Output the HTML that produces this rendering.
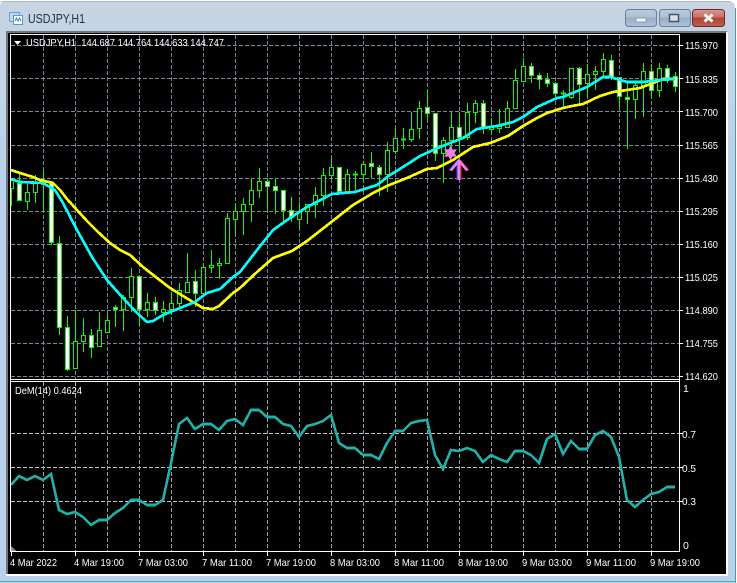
<!DOCTYPE html>
<html><head><meta charset="utf-8"><title>USDJPY,H1</title>
<style>
html,body{margin:0;padding:0;background:#fff;width:737px;height:583px;overflow:hidden}
svg{display:block;position:absolute;left:0;top:0}
text{font-family:"Liberation Sans",sans-serif;font-size:10.500px;fill:#fff}
</style></head><body>
<svg width="737" height="583" viewBox="0 0 737 583" xmlns="http://www.w3.org/2000/svg">
<defs>
<linearGradient id="bg" x1="0" y1="0" x2="0" y2="1"><stop offset="0" stop-color="#c6d4e3"/><stop offset=".12" stop-color="#c4d5e7"/><stop offset=".3" stop-color="#b9d1ea"/><stop offset="1" stop-color="#b9d1ea"/></linearGradient>
<linearGradient id="tb" x1="0" y1="0" x2="0" y2="1"><stop offset="0" stop-color="#bccbdc"/><stop offset=".45" stop-color="#aebfd2"/><stop offset=".5" stop-color="#98aec6"/><stop offset="1" stop-color="#afc2d8"/></linearGradient>
<linearGradient id="cb" x1="0" y1="0" x2="0" y2="1"><stop offset="0" stop-color="#d79a90"/><stop offset=".45" stop-color="#c66f62"/><stop offset=".5" stop-color="#ad4436"/><stop offset="1" stop-color="#bf5f50"/></linearGradient>
<clipPath id="mc"><rect x="11" y="35" width="668" height="344"/></clipPath>
</defs>
<path d="M0 583V6Q0 1 6 1H728Q735 1 735 8V583Z" fill="url(#bg)"/>
<path d="M735.500 8V583" stroke="#4a9aa8" fill="none"/>
<path d="M0 581.500H735" stroke="#2fb5bd"/>
<path d="M0 1.500H730" stroke="#9aa9b8" opacity=".6"/>

<!-- title icon -->
<rect x="9.500" y="12.500" width="10" height="9" fill="#bcd6f2" stroke="#6f9ed6"/>
<rect x="13.500" y="15.500" width="9" height="9" fill="#fff" stroke="#5f95d8"/>
<path d="M15 21l1.500-3 1.500 3 1.500-3 1.500 3" fill="none" stroke="#3f7fd0"/>
<text x="28" y="23" textLength="57" lengthAdjust="spacingAndGlyphs" style="font-size:12.500px;fill:#24303d">USDJPY,H1</text>

<!-- buttons -->
<rect x="625.500" y="9.500" width="31" height="17" rx="3" fill="url(#tb)" stroke="#6d8097"/>
<rect x="636" y="18" width="10" height="4" fill="#f0f3f6" stroke="#6d7f92" stroke-width=".6"/>
<rect x="659.500" y="9.500" width="31" height="17" rx="3" fill="url(#tb)" stroke="#6d8097"/>
<rect x="669.500" y="14.500" width="9" height="7" fill="#d8dfe7" stroke="#46566a" stroke-width="1.500"/>
<rect x="692.500" y="9.500" width="32" height="17" rx="3" fill="url(#cb)" stroke="#6a2a2a"/>
<path d="M704.500 14.500l8 7m0-7l-8 7" stroke="#f2f2f2" stroke-width="3" fill="none"/>

<!-- client -->
<rect x="6" y="31" width="721" height="544" fill="#6f7680"/>
<rect x="8" y="33" width="719" height="541" fill="#000"/>
<rect x="6" y="574" width="722" height="2" fill="#fff"/>
<rect x="726" y="32" width="2" height="544" fill="#fff"/>

<!-- grid main -->
<g stroke="#778899" fill="none" stroke-dasharray="4 2" shape-rendering="crispEdges">
<path d="M11 45.500H679M11 78.500H679M11 111.500H679M11 145.500H679M11 178.500H679M11 211.500H679M11 244.500H679M11 277.500H679M11 310.500H679M11 343.500H679M11 376.500H679"/>
<path d="M43.500 35V379M75.500 35V379M107.500 35V379M139.500 35V379M171.500 35V379M203.500 35V379M235.500 35V379M267.500 35V379M299.500 35V379M331.500 35V379M363.500 35V379M395.500 35V379M427.500 35V379M459.500 35V379M491.500 35V379M523.500 35V379M555.500 35V379M587.500 35V379M619.500 35V379M651.500 35V379"/>
</g>

<g clip-path="url(#mc)" shape-rendering="crispEdges">
<!-- wicks -->
<path fill="none" stroke="#00ff00" d="M11.500 178V206M19.500 173V201M27.500 182V210M35.500 175V203M43.500 170V212M51.500 181V245M59.500 236V335M67.500 316V371M75.500 310V368M83.500 318V352M91.500 329V358M99.500 312V346M107.500 314V332M115.500 305V327M123.500 295V331M131.500 268V312M139.500 276V326M147.500 293V317M155.500 297V315M163.500 301V322M171.500 292V315M179.500 283V308M187.500 253V292M195.500 270V307M203.500 263V293M211.500 250V273M219.500 258V279M227.500 213V263M235.500 203V234M243.500 198V235M251.500 178V222M259.500 168V198M267.500 178V210M275.500 178V214M283.500 190V222M291.500 197V222M299.500 202V228M307.500 204V224M315.500 187V218M323.500 168V206M331.500 158V180M339.500 167V193M347.500 169V193M355.500 171V190M363.500 161V181M371.500 152V178M379.500 165V196M387.500 142V192M395.500 128V154M403.500 128V149M411.500 112V142M419.500 101V139M427.500 90V122M435.500 113V161M443.500 137V183M451.500 112V155M459.500 112V152M467.500 103V140M475.500 100V123M483.500 100V134M491.500 118V133M499.500 109V133M507.500 101V127M515.500 69V108M523.500 58V81M531.500 63V83M539.500 73V89M547.500 73V87M555.500 82V97M563.500 90V108M571.500 68V99M579.500 67V105M587.500 64V97M595.500 66V90M603.500 53V77M611.500 55V80M619.500 77V108M627.500 82V149M635.500 82V119M643.500 63V117M651.500 64V99M659.500 63V97M667.500 65V83M675.500 72V92"/>
<!-- bull bodies -->
<path fill="#000" stroke="#00ff00" d="M9.500 180.500h4v8h-4zM25.500 192.500h4v9h-4zM33.500 182.500h4v10h-4zM41.500 182.500h4v2h-4zM73.500 341.500h4v27h-4zM81.500 335.500h4v6h-4zM97.500 330.500h4v16h-4zM105.500 320.500h4v12h-4zM121.500 297.500h4v12h-4zM129.500 276.500h4v21h-4zM145.500 302.500h4v7h-4zM161.500 309.500h4v3h-4zM169.500 303.500h4v6h-4zM177.500 290.500h4v13h-4zM185.500 282.500h4v10h-4zM201.500 267.500h4v26h-4zM209.500 265.500h4v2h-4zM217.500 263.500h4v2h-4zM225.500 218.500h4v45h-4zM233.500 211.500h4v8h-4zM241.500 204.500h4v7h-4zM249.500 190.500h4v14h-4zM257.500 181.500h4v9h-4zM297.500 211.500h4v8h-4zM305.500 204.500h4v7h-4zM313.500 195.500h4v9h-4zM321.500 175.500h4v20h-4zM329.500 167.500h4v8h-4zM345.500 174.500h4v17h-4zM361.500 164.500h4v10h-4zM385.500 150.500h4v24h-4zM393.500 138.500h4v13h-4zM409.500 129.500h4v10h-4zM417.500 108.500h4v20h-4zM441.500 140.500h4v13h-4zM449.500 127.500h4v13h-4zM465.500 112.500h4v25h-4zM473.500 103.500h4v9h-4zM489.500 127.500h4v2h-4zM497.500 126.500h4v2h-4zM505.500 108.500h4v19h-4zM513.500 80.500h4v28h-4zM521.500 66.500h4v15h-4zM569.500 68.500h4v29h-4zM585.500 74.500h4v9h-4zM593.500 71.500h4v3h-4zM601.500 59.500h4v12h-4zM633.500 85.500h4v14h-4zM641.500 71.500h4v14h-4zM657.500 68.500h4v22h-4z"/>
<!-- bear bodies -->
<path fill="#fff" stroke="#00ff00" d="M17.500 183.500h4v17h-4zM49.500 183.500h4v59h-4zM57.500 243.500h4v84h-4zM65.500 327.500h4v42h-4zM89.500 335.500h4v12h-4zM113.500 307.500h4v2h-4zM137.500 276.500h4v33h-4zM153.500 302.500h4v8h-4zM193.500 281.500h4v12h-4zM265.500 181.500h4v5h-4zM273.500 186.500h4v4h-4zM281.500 190.500h4v20h-4zM289.500 210.500h4v7h-4zM337.500 167.500h4v24h-4zM369.500 163.500h4v3h-4zM377.500 167.500h4v7h-4zM425.500 107.500h4v6h-4zM433.500 113.500h4v40h-4zM457.500 127.500h4v10h-4zM481.500 103.500h4v24h-4zM529.500 66.500h4v9h-4zM537.500 75.500h4v4h-4zM545.500 79.500h4v4h-4zM553.500 83.500h4v10h-4zM577.500 68.500h4v16h-4zM609.500 60.500h4v17h-4zM617.500 77.500h4v19h-4zM625.500 97.500h4v2h-4zM649.500 71.500h4v19h-4zM665.500 68.500h4v9h-4zM673.500 76.500h4v10h-4z"/>
<path fill="none" stroke="#00ff00" stroke-width="2" d="M353 174.500h5M401 139.500h5M561 93.500h5"/>
<!-- yellow MA -->
<polyline fill="none" stroke="#ffff00" stroke-width="2.700" points="11,170 20,173 33,177 40,180 53,183 60,190 67,199 77,210 87,221 98,232 110,243 120,250 130,255 143,267 157,278 170,288 183,296 193,302 203,308 213,309 219,306 233,293 240,288 257,272 273,258 292,251 307,241 330,223 353,205 373,193 387,186 407,178 427,169 437,168 453,160 473,147 490,143 493,142 508,136 523,126 537,118 547,113 563,108 572,106 583,104 600,96 613,92 627,90 640,88 653,83 663,79 675,79"/>
<!-- cyan MA -->
<polyline fill="none" stroke="#00ffff" stroke-width="2.700" points="11,179 20,182 43,183 55,190 63,203 77,230 92,257 107,280 123,298 137,313 147,322 153,321 163,315 180,308 195,302 207,293 220,289 233,277 240,272 257,250 273,230 290,218 307,207 332,194 355,192 377,185 390,175 403,167 420,156 440,147 463,138 477,129 490,127 497,126 513,122 523,117 537,107 557,98 563,97 587,87 603,77 610,77 627,82 643,82 660,80 675,79"/>
</g>

<!-- star -->
<polygon fill="#f07ee6" points="450.500,145.500 452.500,149.500 457,149.250 454.500,153 457,156.750 452.500,156.500 450.500,160.500 448.500,156.500 444,156.750 446.500,153 444,149.250 448.500,149.500"/>
<!-- arrow -->
<g fill="none" stroke-width="2">
<path d="M457.500 161V180M449.500 170.500L458 160.500" stroke="#5a54ff"/>
<path d="M460.500 161V180M468.500 170.500L460 160.500" stroke="#e0203c"/>
<path d="M459 160V180M451 170.500L459 160.500L467 170.500" stroke="#ee82ee" stroke-width="2.500"/>
</g>

<!-- sub grid -->
<g stroke="#9aa4ae" fill="none" stroke-dasharray="4 2" shape-rendering="crispEdges">
<path d="M11 433.500H679M11 467.500H679M11 501.500H679" stroke="#c0c4c8"/>
<path d="M43.500 382V551M75.500 382V551M107.500 382V551M139.500 382V551M171.500 382V551M203.500 382V551M235.500 382V551M267.500 382V551M299.500 382V551M331.500 382V551M363.500 382V551M395.500 382V551M427.500 382V551M459.500 382V551M491.500 382V551M523.500 382V551M555.500 382V551M587.500 382V551M619.500 382V551M651.500 382V551"/>
</g>
<polygon points="11,546 17,551.500 11,551.500" fill="#8b929a"/>
<!-- DeM -->
<polyline shape-rendering="crispEdges" fill="none" stroke="#20b2aa" stroke-width="2.600" points="11,485 19,476 27,480 35,476 43,480 51,474 59,510 67,514 75,512 83,517 91,525 99,520 107,520 115,513 123,508 131,500 139,500 147,505 155,505 163,500 171,463 179,424 187,418 195,429 203,424 211,424 219,430 227,421 235,419 243,425 251,410 259,410 267,417 275,417 283,424 291,426 299,437 307,426 315,424 323,421 331,415 339,443 347,448 355,448 363,455 371,455 379,459 387,443 395,431 403,431 411,423 419,421 427,420 435,455 443,469 451,450 459,451 467,448 475,451 483,462 491,455 499,459 507,462 515,451 523,451 531,455 539,463 547,439 555,434 563,454 571,441 579,449 587,449 595,435 603,431 611,437 619,457 627,500 635,507 643,500 651,494 659,492 667,487 675,487"/>

<!-- frames -->
<g fill="#fff" shape-rendering="crispEdges">
<rect x="10" y="34" width="670" height="1"/>
<rect x="10" y="34" width="1" height="518"/>
<rect x="679" y="34" width="1" height="518"/>
<rect x="10" y="379" width="670" height="1"/>
<rect x="10" y="381" width="670" height="1"/>
<rect x="10" y="551" width="670" height="1"/>
<path d="M680 45h3v1h-3zM680 78h3v1h-3zM680 111h3v1h-3zM680 145h3v1h-3zM680 178h3v1h-3zM680 211h3v1h-3zM680 244h3v1h-3zM680 277h3v1h-3zM680 310h3v1h-3zM680 343h3v1h-3zM680 376h3v1h-3zM680 433h3v1h-3zM680 467h3v1h-3zM680 501h3v1h-3z"/>
<path d="M11 552h1v4h-1zM75 552h1v4h-1zM139 552h1v4h-1zM203 552h1v4h-1zM267 552h1v4h-1zM331 552h1v4h-1zM395 552h1v4h-1zM459 552h1v4h-1zM523 552h1v4h-1zM587 552h1v4h-1zM651 552h1v4h-1z"/>
</g>

<!-- legends -->
<polygon points="14,41 21,41 17.500,45" fill="#fff"/>
<text x="26" y="46" textLength="198" lengthAdjust="spacingAndGlyphs" xml:space="preserve">USDJPY,H1  144.687 144.764 144.633 144.747</text>
<text x="15" y="394" textLength="67" lengthAdjust="spacingAndGlyphs">DeM(14) 0.4624</text>

<!-- right axis -->
<text x="685" y="49" textLength="33" lengthAdjust="spacingAndGlyphs">115.970</text>
<text x="685" y="83" textLength="33" lengthAdjust="spacingAndGlyphs">115.835</text>
<text x="685" y="116" textLength="33" lengthAdjust="spacingAndGlyphs">115.700</text>
<text x="685" y="149" textLength="33" lengthAdjust="spacingAndGlyphs">115.565</text>
<text x="685" y="182" textLength="33" lengthAdjust="spacingAndGlyphs">115.430</text>
<text x="685" y="215" textLength="33" lengthAdjust="spacingAndGlyphs">115.295</text>
<text x="685" y="248" textLength="33" lengthAdjust="spacingAndGlyphs">115.160</text>
<text x="685" y="281" textLength="33" lengthAdjust="spacingAndGlyphs">115.025</text>
<text x="685" y="314" textLength="33" lengthAdjust="spacingAndGlyphs">114.890</text>
<text x="685" y="347" textLength="33" lengthAdjust="spacingAndGlyphs">114.755</text>
<text x="685" y="380" textLength="33" lengthAdjust="spacingAndGlyphs">114.620</text>
<text x="683" y="392">1</text>
<text x="682" y="438" textLength="14" lengthAdjust="spacingAndGlyphs">0.7</text>
<text x="682" y="472" textLength="14" lengthAdjust="spacingAndGlyphs">0.5</text>
<text x="682" y="505" textLength="14" lengthAdjust="spacingAndGlyphs">0.3</text>
<text x="683" y="549">0</text>
<!-- time axis -->
<text x="10" y="566" textLength="47" lengthAdjust="spacingAndGlyphs">4 Mar 2022</text>
<text x="74" y="566" textLength="50" lengthAdjust="spacingAndGlyphs">4 Mar 19:00</text>
<text x="138" y="566" textLength="50" lengthAdjust="spacingAndGlyphs">7 Mar 03:00</text>
<text x="202" y="566" textLength="50" lengthAdjust="spacingAndGlyphs">7 Mar 11:00</text>
<text x="266" y="566" textLength="50" lengthAdjust="spacingAndGlyphs">7 Mar 19:00</text>
<text x="330" y="566" textLength="50" lengthAdjust="spacingAndGlyphs">8 Mar 03:00</text>
<text x="394" y="566" textLength="50" lengthAdjust="spacingAndGlyphs">8 Mar 11:00</text>
<text x="458" y="566" textLength="50" lengthAdjust="spacingAndGlyphs">8 Mar 19:00</text>
<text x="522" y="566" textLength="50" lengthAdjust="spacingAndGlyphs">9 Mar 03:00</text>
<text x="586" y="566" textLength="50" lengthAdjust="spacingAndGlyphs">9 Mar 11:00</text>
<text x="650" y="566" textLength="50" lengthAdjust="spacingAndGlyphs">9 Mar 19:00</text>
</svg>
</body></html>
